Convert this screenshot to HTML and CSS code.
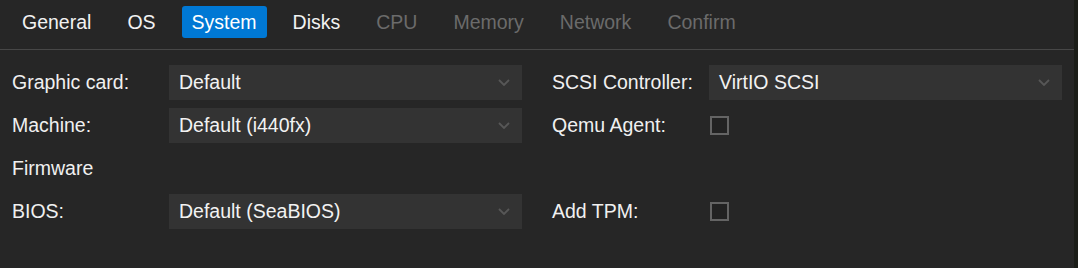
FILE: index.html
```html
<!DOCTYPE html>
<html lang="en">
<head>
    <meta charset="UTF-8">
    <meta name="viewport" content="width=device-width, initial-scale=1.0">
    <title>Create VM - System</title>
    <link rel="stylesheet" href="styles.css">
</head>
<body>
    <div class="wizard">
        <div class="tab-bar">
            <span class="tab">General</span>
            <span class="tab">OS</span>
            <span class="tab active">System</span>
            <span class="tab">Disks</span>
            <span class="tab disabled">CPU</span>
            <span class="tab disabled">Memory</span>
            <span class="tab disabled">Network</span>
            <span class="tab disabled">Confirm</span>
        </div>

        <div class="form">
            <div class="column">
                <div class="row">
                    <span class="label">Graphic card:</span>
                    <div class="combo">
                        <span class="combo-value">Default</span>
                        <svg class="chevron" width="12" height="7" viewBox="0 0 12 7"><path d="M1 1 L6 6 L11 1" /></svg>
                    </div>
                </div>
                <div class="row">
                    <span class="label">Machine:</span>
                    <div class="combo">
                        <span class="combo-value">Default (i440fx)</span>
                        <svg class="chevron" width="12" height="7" viewBox="0 0 12 7"><path d="M1 1 L6 6 L11 1" /></svg>
                    </div>
                </div>
                <div class="row">
                    <span class="label">Firmware</span>
                </div>
                <div class="row">
                    <span class="label">BIOS:</span>
                    <div class="combo">
                        <span class="combo-value">Default (SeaBIOS)</span>
                        <svg class="chevron" width="12" height="7" viewBox="0 0 12 7"><path d="M1 1 L6 6 L11 1" /></svg>
                    </div>
                </div>
            </div>

            <div class="column">
                <div class="row">
                    <span class="label">SCSI Controller:</span>
                    <div class="combo">
                        <span class="combo-value">VirtIO SCSI</span>
                        <svg class="chevron" width="12" height="7" viewBox="0 0 12 7"><path d="M1 1 L6 6 L11 1" /></svg>
                    </div>
                </div>
                <div class="row">
                    <span class="label">Qemu Agent:</span>
                    <span class="checkbox"></span>
                </div>
                <div class="row"></div>
                <div class="row">
                    <span class="label">Add TPM:</span>
                    <span class="checkbox"></span>
                </div>
            </div>
        </div>
    </div>
</body>
</html>
```

FILE: styles.css
```css
body {
    margin: 0;
    background: #1b1d18;
    font-family: "Liberation Sans", Arial, sans-serif;
    font-size: 19.5px;
    color: #f0f0f0;
}
.wizard {
    width: 1074px;
    height: 268px;
    background: #262626;
}
.tab-bar {
    display: flex;
    gap: 16px;
    height: 49px;
    padding-left: 12px;
    border-bottom: 1px solid #474747;
    box-sizing: border-box;
    height: 50px;
}
.tab {
    height: 32px;
    line-height: 32px;
    margin-top: 6px;
    padding: 0 10px;
    border-radius: 3px;
    color: #f2f2f2;
}
.tab.active {
    background: #0078d4;
    color: #ffffff;
}
.tab.disabled {
    color: #6b6b6b;
}
.form {
    display: grid;
    grid-template-columns: 510px 510px;
    column-gap: 30px;
    padding: 15px 12px 0;
}
.column {
    display: flex;
    flex-direction: column;
    gap: 8px;
}
.row {
    display: flex;
    align-items: center;
    height: 35px;
}
.label {
    width: 157px;
    flex-shrink: 0;
}
.combo {
    flex: 1;
    height: 35px;
    display: flex;
    align-items: center;
    justify-content: space-between;
    padding: 0 12px 0 10px;
    background: #333333;
}
.combo-value {
    color: #f2f2f2;
}
.chevron path {
    fill: none;
    stroke: #575757;
    stroke-width: 1.8;
}
.checkbox {
    width: 15px;
    height: 15px;
    margin-left: 1px;
    border: 2px solid #646464;
    background: #222222;
}
```
